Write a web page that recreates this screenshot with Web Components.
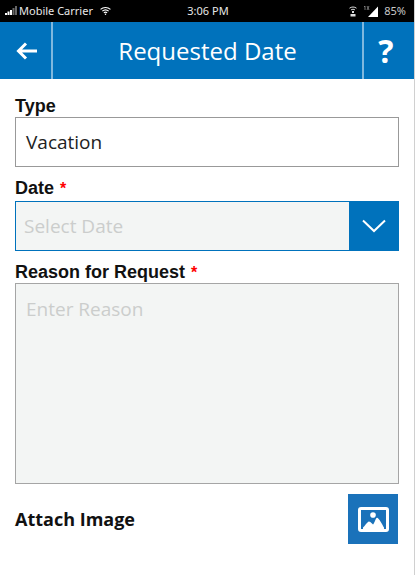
<!DOCTYPE html>
<html>
<head>
<meta charset="utf-8">
<title>Requested Date</title>
<style>
    html, body { margin: 0; padding: 0; background: #fff; }
    body { width: 415px; height: 575px; overflow: hidden; }
</style>
</head>
<body>
<request-screen>
    <status-bar slot="status"></status-bar>
    <app-header slot="header" title="Requested Date"></app-header>
    <form-label text="Type" style="margin-bottom:0"></form-label>
    <text-box value="Vacation"></text-box>
    <form-label text="Date" required style="margin-bottom:2px"></form-label>
    <date-select placeholder="Select Date"></date-select>
    <form-label text="Reason for Request" required style="margin-bottom:0"></form-label>
    <reason-box placeholder="Enter Reason"></reason-box>
    <attach-row text="Attach Image"></attach-row>
</request-screen>

<script>
class RequestScreen extends HTMLElement {
    constructor() {
        super();
        this.attachShadow({ mode: 'open' });
    }
    connectedCallback() {
        this.shadowRoot.innerHTML = `
            <style>
                :host {
                    display: block;
                    width: 415px;
                    height: 575px;
                    box-sizing: border-box;
                    border-right: 1px solid #d0d0d0;
                    overflow: hidden;
                }
                .form {
                    display: flex;
                    flex-direction: column;
                    padding: 17px 15px 0 15px;
                    width: 384px;
                }
            </style>
            <slot name="status"></slot>
            <slot name="header"></slot>
            <div class="form"><slot></slot></div>
        `;
    }
}

class StatusBar extends HTMLElement {
    constructor() {
        super();
        this.attachShadow({ mode: 'open' });
    }
    connectedCallback() {
        this.shadowRoot.innerHTML = `
            <style>
                :host {
                    display: grid;
                    grid-template-columns: 1fr auto 1fr;
                    align-items: center;
                    height: 22px;
                    background: #000;
                    color: #e8e8e8;
                    font: 11px/22px "Noto Sans", "Open Sans", sans-serif;
                    padding: 0 8px 0 5px;
                }
                .left, .right { display: flex; align-items: center; }
                .right { justify-content: flex-end; color: #c8c8c8; font-size: 11px; }
                svg { display: block; }
                .carrier { margin: 0 0 0 2px; }
                .wifi { margin-left: 7px; }
                .time { margin-left: 5px; }
                .one { margin-right: 6px; }
            </style>
            <div class="left">
                <svg width="12" height="10" viewBox="0 0 12 10">
                    <rect x="0" y="7" width="2" height="2" fill="#fff"/>
                    <rect x="2.500" y="5.500" width="2" height="3.500" fill="#fff"/>
                    <rect x="5" y="4" width="2" height="5" fill="#fff"/>
                    <rect x="7.500" y="2" width="2" height="7" fill="#666"/>
                    <rect x="10" y="0" width="2" height="9" fill="#666"/>
                </svg>
                <span class="carrier">Mobile Carrier</span>
                <svg class="wifi" width="11" height="10" viewBox="0 0 12 10" fill="none" stroke="#fff" stroke-width="1.2">
                    <path d="M.6 3.200C3.600 .5 8.400 .5 11.400 3.200"/>
                    <path d="M2.500 5.200C4.500 3.500 7.500 3.500 9.500 5.200"/>
                    <path d="M4.200 7C5.200 6.200 6.800 6.200 7.800 7"/>
                    <circle cx="6" cy="8.600" r=".8" fill="#fff" stroke="none"/>
                </svg>
            </div>
            <span class="time">3:06 PM</span>
            <div class="right">
                <svg class="one" width="8" height="11" viewBox="0 0 8 11" fill="none" stroke="#ddd" stroke-width="1">
                    <path d="M.5 2.200C2.500 .6 5.500 .6 7.500 2.200"/>
                    <path d="M2 4C3.200 3 4.800 3 6 4"/>
                    <rect x="3" y="5" width="2" height="2" fill="#ddd" stroke="none"/>
                    <rect x="1.500" y="8" width="5" height="2.500" fill="#ddd" stroke="none"/>
                </svg>
                <svg width="15" height="11" viewBox="0 0 15 11">
                    <path d="M15 0.500V11H5z" fill="#fff"/>
                    <path d="M1 1L2 0V4M4 0L6 4M6 0L4 4" fill="none" stroke="#bbb" stroke-width=".6"/>
                </svg>
                <span style="margin-left:6px">85%</span>
            </div>
        `;
    }
}

class AppHeader extends HTMLElement {
    constructor() {
        super();
        this.attachShadow({ mode: 'open' });
    }
    connectedCallback() {
        this.shadowRoot.innerHTML = `
            <style>
                :host {
                    display: flex;
                    height: 57px;
                    background: #0072bc;
                    color: #fff;
                }
                .side {
                    flex: none;
                    display: flex;
                    align-items: center;
                    justify-content: center;
                }
                .back { width: 48px; padding-left: 3px; border-right: 2px solid #7fb8de; }
                .help {
                    width: 44px;
                    padding-right: 6px;
                    border-left: 2px solid #7fb8de;
                    font: bold 32px/57px "Open Sans", sans-serif;
                }
                .title {
                    flex: 1;
                    text-align: center;
                    font: 24px/57px "Open Sans", sans-serif;
                }
            </style>
            <div class="side back">
                <svg width="22" height="18" viewBox="0 0 22 18" fill="none" stroke="#fff" stroke-width="3">
                    <path d="M21 9H3M10 1.500L2.500 9L10 16.500"/>
                </svg>
            </div>
            <div class="title">${this.getAttribute('title')}</div>
            <div class="side help">?</div>
        `;
    }
}

class FormLabel extends HTMLElement {
    constructor() {
        super();
        this.attachShadow({ mode: 'open' });
    }
    connectedCallback() {
        const star = this.hasAttribute('required') ? ' <span class="req">*</span>' : '';
        this.shadowRoot.innerHTML = `
            <style>
                :host {
                    display: block;
                    font: bold 18px/21px "Liberation Sans", Arial, sans-serif;
                    color: #111;
                    margin-bottom: 1px;
                }
                .req { color: #f00; font-size: 16px; margin-left: 1px; }
            </style>
            ${this.getAttribute('text')}${star}
        `;
    }
}

class TextBox extends HTMLElement {
    constructor() {
        super();
        this.attachShadow({ mode: 'open' });
    }
    connectedCallback() {
        this.shadowRoot.innerHTML = `
            <style>
                :host {
                    display: block;
                    box-sizing: border-box;
                    height: 50px;
                    border: 1px solid #999;
                    background: #fff;
                    color: #222;
                    padding: 0 10px;
                    margin-bottom: 11px;
                    font: 19px/48px "Open Sans", sans-serif;
                }
            </style>
            ${this.getAttribute('value')}
        `;
    }
}

class DateSelect extends HTMLElement {
    constructor() {
        super();
        this.attachShadow({ mode: 'open' });
    }
    connectedCallback() {
        this.shadowRoot.innerHTML = `
            <style>
                :host {
                    display: flex;
                    box-sizing: border-box;
                    height: 50px;
                    border: 1px solid #0072bc;
                    background: #f3f5f4;
                    margin-bottom: 11px;
                }
                .ph {
                    flex: 1;
                    padding-left: 8px;
                    color: #cbcdcc;
                    font: 19px/48px "Open Sans", sans-serif;
                }
                .arrow {
                    flex: none;
                    width: 50px;
                    margin: -1px -1px -1px 0;
                    background: #0072bc;
                    display: flex;
                    align-items: center;
                    justify-content: center;
                }
                svg { display: block; }
            </style>
            <div class="ph">${this.getAttribute('placeholder')}</div>
            <div class="arrow">
                <svg width="24" height="14" viewBox="0 0 24 14" fill="none" stroke="#fff" stroke-width="2">
                    <path d="M1 1.500L12 12L23 1.500"/>
                </svg>
            </div>
        `;
    }
}

class ReasonBox extends HTMLElement {
    constructor() {
        super();
        this.attachShadow({ mode: 'open' });
    }
    connectedCallback() {
        this.shadowRoot.innerHTML = `
            <style>
                :host {
                    display: block;
                    box-sizing: border-box;
                    height: 201px;
                    border: 1px solid #a5a5a5;
                    background: #f3f5f4;
                    color: #cbcdcc;
                    padding: 13px 10px;
                    margin-bottom: 10px;
                    font: 19px/25px "Open Sans", sans-serif;
                }
            </style>
            ${this.getAttribute('placeholder')}
        `;
    }
}

class AttachRow extends HTMLElement {
    constructor() {
        super();
        this.attachShadow({ mode: 'open' });
    }
    connectedCallback() {
        this.shadowRoot.innerHTML = `
            <style>
                :host {
                    display: flex;
                    align-items: center;
                    justify-content: space-between;
                    font: bold 18px/50px "Open Sans", sans-serif;
                    color: #111;
                }
                .btn {
                    width: 50px;
                    height: 50px;
                    margin-right: 1px;
                    background: #1a72ba;
                    display: flex;
                    align-items: center;
                    justify-content: center;
                }
                svg { display: block; }
            </style>
            <span>${this.getAttribute('text')}</span>
            <div class="btn">
                <svg width="31" height="25" viewBox="0 0 31 25">
                    <rect x="1.500" y="1.500" width="28" height="22" rx="1.500" fill="none" stroke="#fff" stroke-width="3"/>
                    <circle cx="15" cy="8" r="2.800" fill="#fff"/>
                    <path d="M5 22V20.500C7 19 9 15 11 14.600C13 15 14 17 15 17.500C16.500 16.500 17.500 11 19 10.700C21 11 24 17 26 20.500V22z" fill="#fff"/>
                </svg>
            </div>
        `;
    }
}

customElements.define('request-screen', RequestScreen);
customElements.define('status-bar', StatusBar);
customElements.define('app-header', AppHeader);
customElements.define('form-label', FormLabel);
customElements.define('text-box', TextBox);
customElements.define('date-select', DateSelect);
customElements.define('reason-box', ReasonBox);
customElements.define('attach-row', AttachRow);
</script>
</body>
</html>
